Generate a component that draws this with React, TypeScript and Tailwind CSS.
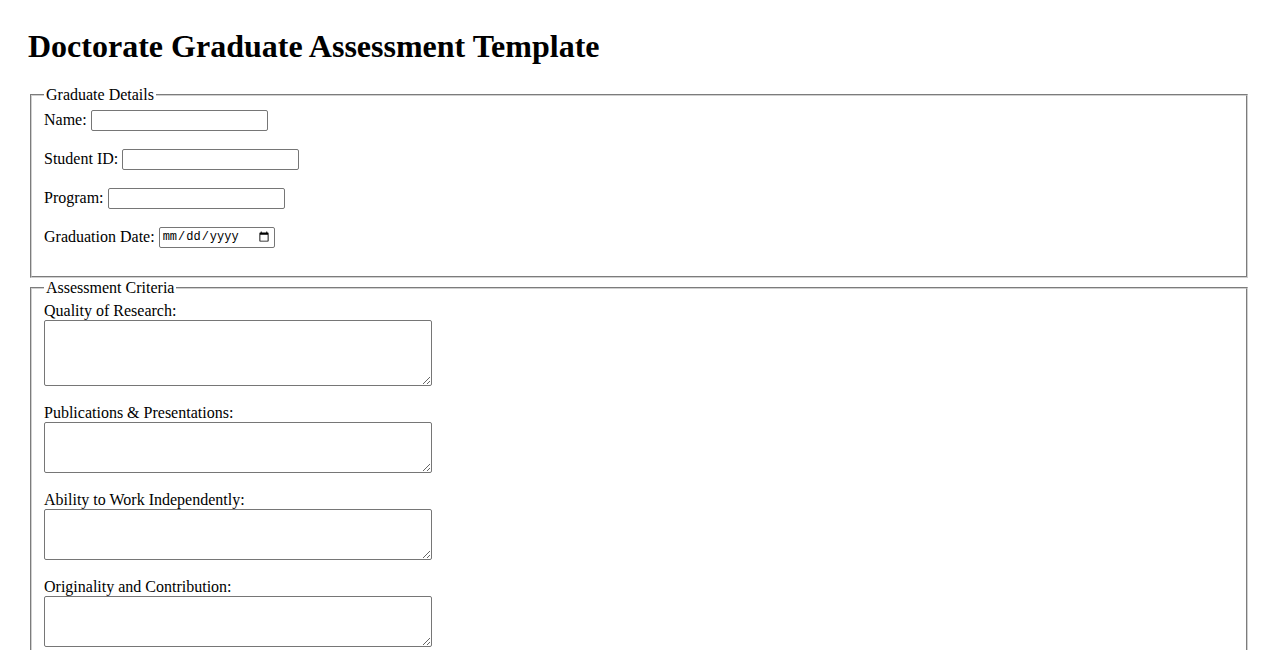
const detailFields = [
  { label: "Name:", type: "text" },
  { label: "Student ID:", type: "text" },
  { label: "Program:", type: "text" },
  { label: "Graduation Date:", type: "date" },
];

const criteria = [
  { label: "Quality of Research:", height: "h-[66px]" },
  { label: "Publications & Presentations:", height: "h-[51px]" },
  { label: "Ability to Work Independently:", height: "h-[51px]" },
  { label: "Originality and Contribution:", height: "h-[51px]" },
];

export default function App() {
  return (
    <div className="min-h-screen bg-white px-[28px] pt-[28px] pb-8 font-['Liberation_Serif',serif] text-[16px] leading-[18.4px] text-black">
      <h1 className="text-[32px] font-bold leading-[36.8px]">Doctorate Graduate Assessment Template</h1>
      <form className="mt-[21px]">
        <fieldset className="mx-[2px] border-2 border-[#d0d0d0] px-3 pt-[5.6px] pb-[11px] [border-style:groove]">
          <legend className="px-[2px]">Graduate Details</legend>
          <div className="mb-[17px] flex flex-col gap-[18px]">
            {detailFields.map((field) => (
              <div key={field.label} className="flex h-[21px] items-center">
                <label className="mr-[4px]">{field.label}</label>
                {field.type === "date" ? (
                  <input
                    type="date"
                    className="h-[21px] w-[116px] rounded-[2px] border border-[#767676] px-[2px] font-['Liberation_Mono',monospace] text-[12px]"
                  />
                ) : (
                  <input
                    type="text"
                    className="h-[21px] w-[177px] rounded-[2px] border border-[#767676] px-[2px] font-['Liberation_Sans',sans-serif] text-[13.33px]"
                  />
                )}
              </div>
            ))}
          </div>
        </fieldset>
        <fieldset className="mx-[2px] mt-[1px] border-2 border-[#d0d0d0] px-3 pt-[4.6px] pb-[10px] [border-style:groove]">
          <legend className="px-[2px]">Assessment Criteria</legend>
          <div className="flex flex-col gap-[17.6px]">
            {criteria.map((item) => (
              <div key={item.label}>
                <label className="block">{item.label}</label>
                <textarea
                  className={`block w-[388px] ${item.height} rounded-[2px] border border-[#767676] px-[2px] py-[2px] font-['Liberation_Mono',monospace] text-[13.33px]`}
                />
              </div>
            ))}
          </div>
        </fieldset>
      </form>
    </div>
  );
}
